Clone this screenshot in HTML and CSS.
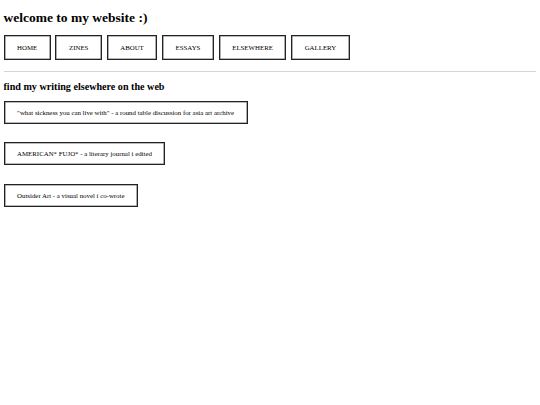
FILE: index.html
```html
<!DOCTYPE html>
<html>
<head>
<meta charset="utf-8">
<title>welcome to my website :)</title>
<link rel="stylesheet" href="styles.css">
</head>
<body>
<h1 class="title">welcome to my website :)</h1>
<nav class="nav">
  <a class="nav-btn" href="#">HOME</a>
  <a class="nav-btn" href="#">ZINES</a>
  <a class="nav-btn" href="#">ABOUT</a>
  <a class="nav-btn" href="#">ESSAYS</a>
  <a class="nav-btn" href="#">ELSEWHERE</a>
  <a class="nav-btn" href="#">GALLERY</a>
</nav>
<hr class="rule">
<h2 class="section-title">find my writing elsewhere on the web</h2>
<div class="links">
  <a class="link-box" href="#">"what sickness you can live with" - a round table discussion for asia art archive</a>
  <a class="link-box" href="#">AMERICAN* FUJO* - a literary journal i edited</a>
  <a class="link-box" href="#">Outsider Art - a visual novel i co-wrote</a>
</div>
</body>
</html>
```
FILE: styles.css
```css
html, body {
  margin: 0;
  padding: 0;
  background: #fff;
}
body {
  padding: 0 4px 0 3.5px;
  font-family: "Liberation Serif", "Times New Roman", serif;
  color: #000;
}
.title {
  margin: 9.5px 0 0;
  font-size: 13.5px;
  line-height: 15.5px;
  font-weight: bold;
}
.nav {
  display: flex;
  gap: 4.6px;
  margin-top: 9.5px;
}
.nav-btn {
  display: block;
  height: 25px;
  box-sizing: border-box;
  padding: 0 12.6px;
  border: 1px solid #222;
  box-shadow: inset 0 0 0 0.6px #777;
  font-size: 6.85px;
  line-height: 23px;
  color: #000;
  text-decoration: none;
}
.rule {
  margin: 11px 0 0 0.5px;
  height: 0;
  border: 0;
  border-top: 1px solid #d4d4d4;
}
.section-title {
  margin: 9.5px 0 0;
  font-size: 10.125px;
  line-height: 11.6px;
  font-weight: bold;
}
.links {
  display: flex;
  flex-direction: column;
  align-items: flex-start;
  gap: 18.5px;
  margin-top: 8.4px;
}
.link-box {
  display: block;
  height: 23px;
  box-sizing: border-box;
  padding: 0 12.6px;
  border: 1px solid #222;
  box-shadow: inset 0 0 0 0.6px #777;
  font-size: 6.85px;
  line-height: 21px;
  color: #000;
  text-decoration: none;
}
```
